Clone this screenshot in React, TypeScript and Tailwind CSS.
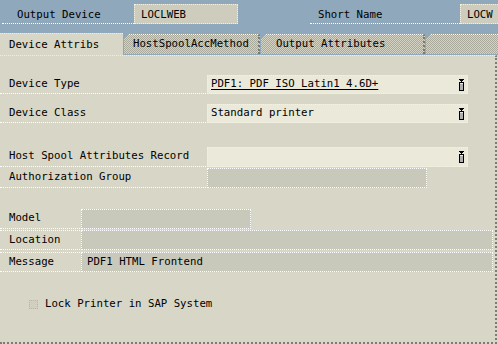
import React from "react";

const DropIcon = () => (
  <svg width="7" height="12" viewBox="0 0 7 12" className="shrink-0">
    <path d="M1 0h5v1h-1v1h-1v1h-1v-1h-1v-1h-1z" fill="#000" />
    <rect x="1.5" y="3.5" width="4" height="8" fill="#e8e8e8" stroke="#000" strokeWidth="1" />
    <path d="M2 6h3M2 8h3M2 10h3" stroke="#777" strokeWidth="1" />
  </svg>
);

const tabInactive =
  "h-[20px] border-t border-dotted border-white border-r-2 border-r-[#7a7a6e] bg-[repeating-conic-gradient(#a9a99b_0%_25%,#d4d3c4_0%_50%)] bg-[length:2px_2px] [clip-path:polygon(5px_0,100%_0,100%_100%,0_100%,0_5px)] flex items-center";

export default function App() {
  return (
    <div className="w-[498px] h-[344px] overflow-hidden bg-[#d8d6c6] flex flex-col font-['DejaVu_Sans_Mono',monospace] text-[10.7px] leading-none text-black">
      {/* header */}
      <div className="h-[33px] shrink-0 bg-[#8fa8bc] flex items-start pt-[4px] overflow-hidden">
        <div className="ml-[2px] w-[132px] h-[20px] shrink-0 border-b border-dotted border-white flex items-center pl-[15px] pt-[3px]">
          Output Device
        </div>
        <div className="w-[104px] h-[20px] shrink-0 bg-[#cecdbd] border border-dotted border-[#f4f2dc] flex items-center pl-[6px] pt-[3px]">
          LOCLWEB
        </div>
        <div className="ml-[72px] w-[150px] h-[20px] shrink-0 border-b border-dotted border-white flex items-center pl-[8px] pt-[3px]">
          Short Name
        </div>
        <div className="w-[44px] h-[20px] shrink-0 bg-[#cecdbd] border border-dotted border-[#f4f2dc] flex items-center pl-[6px] pt-[3px]">
          LOCW
        </div>
      </div>

      {/* tabs */}
      <div className="h-[22px] shrink-0 flex items-end bg-[#8fa8bc] overflow-hidden">
        <div className="w-[123px] h-[22px] shrink-0 bg-[#d8d6c6] border-t border-dotted border-[#eeeee0] flex items-center pl-[9px] pt-[1px]">
          Device Attribs
        </div>
        <div className="ml-[1px] w-[136px] shrink-0 self-stretch flex flex-col justify-start pt-[1px]">
          <div className={tabInactive + " pl-[9px]"}>HostSpoolAccMethod</div>
        </div>
        <div className="ml-[1px] w-[164px] shrink-0 self-stretch flex flex-col pt-[1px]">
          <div className={tabInactive + " pl-[15px]"}>Output Attributes</div>
        </div>
        <div className="ml-[1px] w-[80px] shrink-0 self-stretch flex flex-col pt-[1px]">
          <div className={tabInactive}></div>
        </div>
      </div>

      {/* content */}
      <div className="flex-1 flex flex-col border-t border-dotted border-[#f0efe0] border-r-2 border-r-[#7c7c74] border-b-2 border-b-[#7c7c74] mr-[1px] pt-[19px]">
        {/* Device Type */}
        <div className="flex h-[19px]">
          <div className="w-[206px] border-b border-dotted border-white flex items-center pl-[9px]">Device Type</div>
          <div className="ml-[1px] w-[261px] bg-[#eae9da] border border-dotted border-[#f6f4d6] flex items-center pl-[3px] pr-[2px]">
            <span className="flex-1 underline underline-offset-2">PDF1: PDF ISO Latin1 4.6D+</span>
            <DropIcon />
          </div>
        </div>
        {/* Device Class */}
        <div className="flex h-[19px] mt-[10px]">
          <div className="w-[206px] border-b border-dotted border-white flex items-center pl-[9px]">Device Class</div>
          <div className="ml-[1px] w-[261px] bg-[#eae9da] border border-dotted border-[#f6f4d6] flex items-center pl-[3px] pr-[2px]">
            <span className="flex-1">Standard printer</span>
            <DropIcon />
          </div>
        </div>
        {/* Host Spool */}
        <div className="flex h-[20px] mt-[24px]">
          <div className="w-[206px] border-b border-dotted border-white flex items-center pl-[9px]">Host Spool Attributes Record</div>
          <div className="ml-[1px] w-[261px] bg-[#eae9da] border border-dotted border-[#f6f4d6] flex items-center pl-[3px] pr-[2px]">
            <span className="flex-1"></span>
            <DropIcon />
          </div>
        </div>
        {/* Authorization Group */}
        <div className="flex h-[20px] mt-[1px]">
          <div className="w-[206px] border-b border-dotted border-white flex items-center pl-[9px]">Authorization Group</div>
          <div className="ml-[1px] w-[220px] bg-[#c9c9bb] border border-dotted border-white"></div>
        </div>
        {/* Model */}
        <div className="flex h-[20px] mt-[21px]">
          <div className="w-[80px] border-b border-dotted border-white flex items-center pl-[9px]">Model</div>
          <div className="ml-[1px] w-[170px] bg-[#c9c9bb] border border-dotted border-white"></div>
        </div>
        {/* Location */}
        <div className="flex h-[20px] mt-[1px]">
          <div className="w-[80px] border-y border-dotted border-white flex items-center pl-[9px]">Location</div>
          <div className="ml-[1px] w-[412px] bg-[#c9c9bb] border border-dotted border-white"></div>
        </div>
        {/* Message */}
        <div className="flex h-[20px] mt-[2px]">
          <div className="w-[80px] border-y border-dotted border-white flex items-center pl-[9px]">Message</div>
          <div className="ml-[1px] w-[412px] bg-[#c9c9bb] border border-dotted border-white flex items-center pl-[5px]">
            PDF1 HTML Frontend
          </div>
        </div>
        {/* Checkbox */}
        <div className="flex items-center mt-[27px] pl-[29px]">
          <div className="w-[9px] h-[9px] border border-dotted border-[#b8b69a] bg-[#d0cfc0]"></div>
          <span className="ml-[7px]">Lock Printer in SAP System</span>
        </div>
      </div>
    </div>
  );
}
